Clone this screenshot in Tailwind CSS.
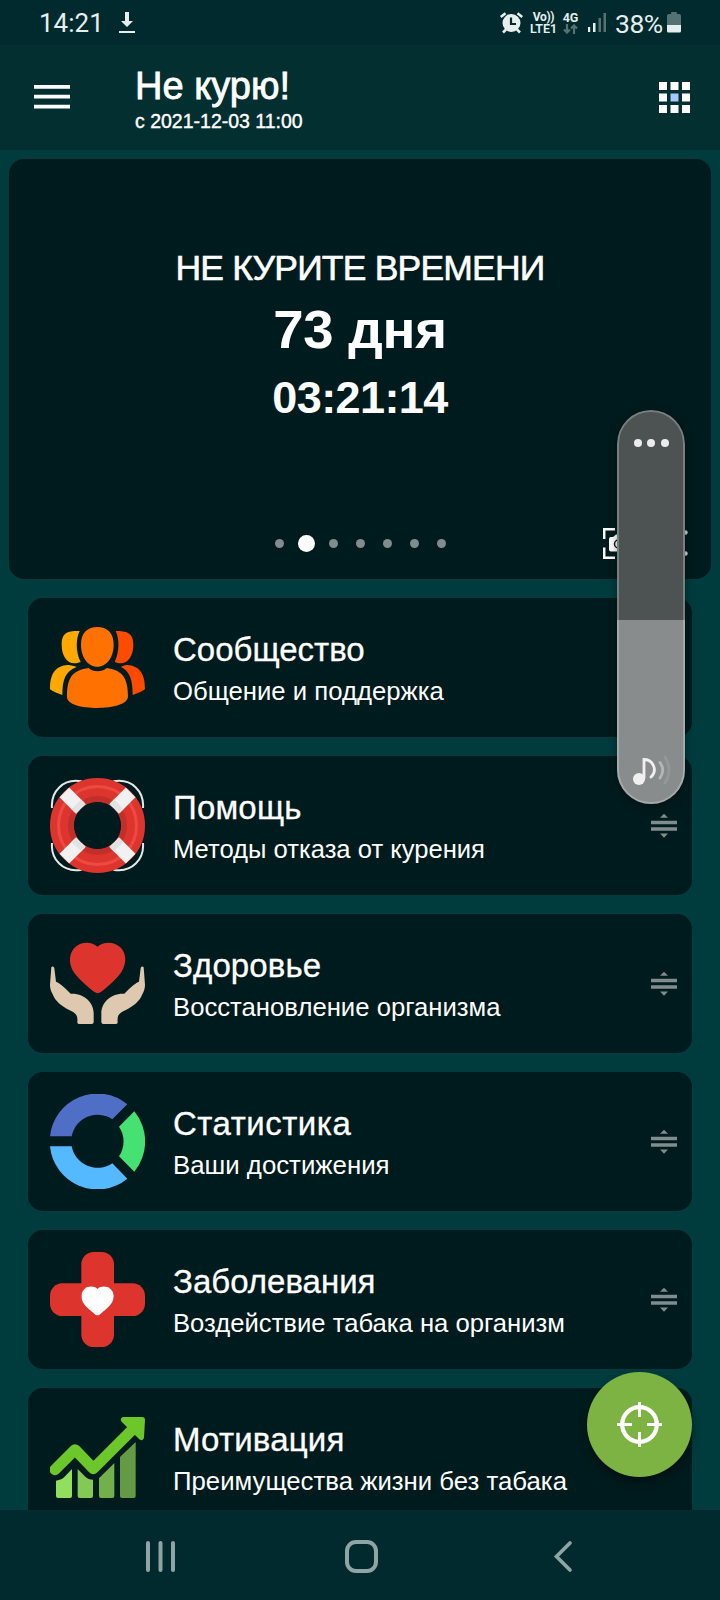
<!DOCTYPE html>
<html lang="ru">
<head>
<meta charset="utf-8">
<title>Не курю!</title>
<script src="https://cdn.jsdelivr.net/npm/@tailwindcss/browser@4"></script>
</head>
<body class="bg-[#003b3e]">
<svg class="hidden"><symbol id="handle" viewBox="0 0 26 26"><path d="M0 7.700h26v3.600H0zM0 14.200h26v3.600H0zM9 4.800 13 .8l4 4zM9 20.500l4 4.200 4-4.200z"/></symbol></svg>
<div class="relative flex h-[1600px] w-[720px] flex-col overflow-hidden bg-[#003b3e] font-['Liberation_Sans',Arial,sans-serif] text-white">

  <!-- Status bar -->
  <div class="flex h-[45px] shrink-0 items-center justify-between bg-[#002a2d] pr-[39px] pl-[39px] font-[Roboto,sans-serif] text-[#e6efee]">
    <div class="flex items-center">
      <span class="w-[80px] pt-px text-[26px] leading-[45px]">14:21</span>
      <svg class="h-[22px] w-[16px]" viewBox="0 0 16 22" fill="currentColor"><path d="M6 0h4v9h4l-6 6-6-6h4zM0 19h16v2H0z"/></svg>
    </div>
    <div class="flex items-center">
      <svg class="h-[22px] w-[23px]" viewBox="0 0 23 22"><g fill="none" stroke="#e6efee" stroke-width="2.600"><path d="M.8 5 5.500 1.300M22.200 5 17.500 1.300M6 17.500 3 20.500M17 17.500l3 3"/></g><circle cx="11.500" cy="11" r="9" fill="#e6efee"/><path d="M11 5.500v6.500h5" fill="none" stroke="#002a2d" stroke-width="2.200"/></svg>
      <div class="ml-[7px] flex w-[27px] flex-col items-center text-[12px] leading-[11px] font-bold whitespace-nowrap"><span class="tracking-[-0.3px]">Vo))</span><span class="text-[12.500px] font-semibold">LTE1</span></div>
      <div class="ml-[5px] flex w-[17px] flex-col items-center text-[12.500px] leading-[12px] font-bold"><span>4G</span>
        <svg class="h-[10px] w-[15px]" viewBox="0 0 15 10" fill="none" stroke="#557273" stroke-width="2.200"><path d="M4 0v8M1 5.500l3 3 3-3M11 10V2M8 4.500l3-3 3 3"/></svg></div>
      <svg class="ml-[9px] h-[19px] w-[19px]" viewBox="0 0 19 19"><path d="M0 14h2.200v5H0zM5 10h2.500v9H5z" fill="#e6efee"/><path d="M10.500 5H13v14h-2.500zM15.500 0H18v19h-2.500z" fill="#557273"/></svg>
      <span class="ml-[8px] w-[52px] pt-[2px] text-[26.500px] leading-[45px] tracking-[-0.5px]">38%</span>
      <svg class="h-[21px] w-[14px]" viewBox="0 0 15 21" preserveAspectRatio="none"><path d="M4.500 0h6v2H13q2 0 2 2v9H0V4q0-2 2-2h2.500z" fill="#557273"/><path d="M0 13h15v6q0 1.500-1.500 1.500h-12Q0 20.500 0 19z" fill="#e6efee"/></svg>
    </div>
  </div>

  <!-- App bar -->
  <header class="flex h-[105px] shrink-0 items-start bg-[#032f31]">
    <svg class="mt-[40px] ml-[34px] h-[24px] w-[36px]" viewBox="0 0 36 24" fill="#fff"><path d="M0 0h36v3.700H0zM0 9.800h36v3.700H0zM0 19.800h36v3.700H0z"/></svg>
    <div class="mt-[19px] ml-[65px] flex-1 whitespace-nowrap">
      <h1 class="text-[38px] leading-[44px] [-webkit-text-stroke:0.8px_white]">Не курю!</h1>
      <p class="mt-[2px] text-[19.500px] leading-[22px] [-webkit-text-stroke:0.4px_white]">с 2021-12-03 11:00</p>
    </div>
    <svg class="mt-[37px] mr-[30px] h-[31px] w-[31px]" viewBox="0 0 31 31" fill="#fff"><path d="M0 0h8v8H0zM11.500 0h8v8h-8zM23 0h8v8h-8zM0 11.500h8v8H0zM23 11.500h8v8h-8zM0 23h8v8H0zM11.500 23h8v8h-8zM23 23h8v8h-8z"/><path d="M11.500 11.500h8v8h-8z" fill="#a5c8ff"/></svg>
  </header>

  <!-- Counter card -->
  <section class="mx-[9px] mt-[9px] flex h-[420px] shrink-0 flex-col items-center rounded-[15px] bg-[#001b1d] pt-[89px] whitespace-nowrap">
    <h2 class="text-[35.500px] leading-[40px] tracking-[-0.8px] [-webkit-text-stroke:0.6px_white]">НЕ КУРИТЕ ВРЕМЕНИ</h2>
    <div class="mt-[12px] text-[54.500px] leading-[60px] font-bold tracking-[-0.3px]">73 дня</div>
    <div class="mt-[13px] text-[45px] leading-[50px] font-bold tracking-[-0.6px]">03:21:14</div>
    <div class="mt-[103px] flex h-[34px] w-full items-center">
      <div class="ml-[257px] flex items-center">
        <div class="flex w-[27px] justify-center"><i class="size-[9px] rounded-full bg-[#7f8d8e]"></i></div>
        <div class="flex w-[27px] justify-center"><i class="size-[17px] rounded-full bg-white"></i></div>
        <div class="flex w-[27px] justify-center"><i class="size-[9px] rounded-full bg-[#7f8d8e]"></i></div>
        <div class="flex w-[27px] justify-center"><i class="size-[9px] rounded-full bg-[#7f8d8e]"></i></div>
        <div class="flex w-[27px] justify-center"><i class="size-[9px] rounded-full bg-[#7f8d8e]"></i></div>
        <div class="flex w-[27px] justify-center"><i class="size-[9px] rounded-full bg-[#7f8d8e]"></i></div>
        <div class="flex w-[27px] justify-center"><i class="size-[9px] rounded-full bg-[#7f8d8e]"></i></div>
      </div>
      <svg class="ml-[148px] h-[31px] w-[31px] shrink-0" viewBox="0 0 31 31"><path d="M12 1.200H1.200V11M19 1.200h10.800V11M12 29.800H1.200V19.500M19 29.800h10.800V19.500" fill="none" stroke="#fff" stroke-width="2.500"/><path d="M8 9h2l3-2.500h5L21 9h2q2 0 2 2v10.500q0 2-2 2H8q-2 0-2-2V11q0-2 2-2z" fill="#fff"/><circle cx="15.500" cy="16" r="4" fill="none" stroke="#001b1d" stroke-width="1.500"/></svg>
      <svg class="ml-[32px] h-[26px] w-[22px] shrink-0" viewBox="0 0 22 26"><path d="M19 3 4 13l15 10" fill="none" stroke="#fff" stroke-width="2"/><circle cx="19.500" cy="2.500" r="2.200" fill="#c9d0d0"/><circle cx="19.500" cy="23.500" r="2.200" fill="#c9d0d0"/></svg>
    </div>
  </section>

  <!-- Menu -->
  <main class="mx-[28px] mt-[19px] flex h-[912px] shrink-0 flex-col gap-[19px] overflow-hidden whitespace-nowrap">
    <article class="flex h-[139px] shrink-0 items-center rounded-[15px] bg-[#001b1d] pl-[22px]">
      <svg class="size-[95px]" viewBox="0 0 285 285">
        <path d="M89 33C58 33 35 34 35 74c0 32 15 56 38 56 7 0 11-2 19-4C76 94 78 56 89 33zM52 135C22 138 0 153 0 208c10 8 24 13 37 17 0-46 9-71 43-84-9-3-18-7-28-6z" fill="#ffa800"/>
        <path d="M197 33c31 0 53 4 53 41 0 32-15 56-38 56-7 0-11-2-18-4 15-32 14-70 3-93zM233 135c30 3 52 18 52 73-10 8-24 13-37 17 0-46-9-71-35-84 5-3 10-7 20-6z" fill="#ff4b00"/>
        <path d="M142 21c29 0 49 17 49 53 0 36-20 66-49 66s-49-30-49-66c0-36 20-53 49-53zM116 144c14 13 39 13 54 0 44 6 64 26 64 85 0 24-44 35-92 35s-91-11-91-33c0-60 17-80 65-87z" fill="#ff7100"/>
      </svg>
      <div class="ml-[28px] flex-1">
        <h3 class="text-[33px] leading-[40px] [-webkit-text-stroke:0.3px_white]">Сообщество</h3>
        <p class="mt-[6px] -mb-px text-[25.700px] leading-[30px]">Общение и поддержка</p>
      </div>
      <svg class="mr-[15px] size-[26px] fill-[#7f8d8e]"><use href="#handle"/></svg>
    </article>
    <article class="flex h-[139px] shrink-0 items-center rounded-[15px] bg-[#001b1d] pl-[22px]">
      <svg class="size-[95px]" viewBox="0 0 285 285">
        <g fill="none">
          <path d="M6 90C2 42 38 0 95 10M279 90C283 42 247 0 190 10M6 195c-4 48 32 90 89 80M279 195c4 48-32 90-89 80" stroke="#e4eaea" stroke-width="6"/>
          <circle cx="142.500" cy="142.500" r="106.500" stroke="#dd352e" stroke-width="72"/>
          <circle cx="142.500" cy="142.500" r="117" stroke="#ed4a43" stroke-width="9"/>
          <circle cx="142.500" cy="142.500" r="79.500" stroke="#c22f2b" stroke-width="18"/>
          <path d="M43 43 91 91M242 43 194 91M43 242l48-48M242 242l-48-48" stroke="#f1f1f1" stroke-width="41"/>
          <path d="m79 79 14 14M206 79l-14 14M79 206l14-14M206 206l-14-14" stroke="#e2e2e2" stroke-width="41"/>
        </g>
        <circle cx="142.500" cy="142.500" r="70.500" fill="#001b1d"/>
      </svg>
      <div class="ml-[28px] flex-1">
        <h3 class="text-[33px] leading-[40px] tracking-[0.2px] [-webkit-text-stroke:0.3px_white]">Помощь</h3>
        <p class="mt-[6px] -mb-px text-[25.600px] leading-[30px]">Методы отказа от курения</p>
      </div>
      <svg class="mr-[15px] size-[26px] fill-[#7f8d8e]"><use href="#handle"/></svg>
    </article>
    <article class="flex h-[139px] shrink-0 items-center rounded-[15px] bg-[#001b1d] pl-[22px]">
      <svg class="size-[95px]" viewBox="0 0 285 285">
        <path d="M142.500 32C124 15 92 18 76 33c-19 17-20 46-9 68 11 21 38 44 63 65 9 7 17 7 26 0 25-21 52-44 62-65 12-22 11-51-8-68-17-15-49-18-67.500-1z" fill="#dd352e"/>
        <path d="M4 94c3-4 8-2 9 3l5 40c18 7 33 26 44 36 44-2 69 30 69 58v27c0 4-3 6-6 6H87c-3 0-5-2-5-5 2-24-6-27-23-36-24-12-43-27-51-48-6-12-8-20-8-29z" fill="#dec9b0"/>
        <path d="M281 94c-3-4-8-2-9 3l-5 40c-18 7-33 26-44 36-44-2-69 30-69 58v27c0 4 3 6 6 6h38c3 0 5-2 5-5-2-24 6-27 23-36 24-12 43-27 51-48 6-12 8-20 8-29z" fill="#dec9b0"/>
      </svg>
      <div class="ml-[28px] flex-1">
        <h3 class="text-[33px] leading-[40px] tracking-[0.1px] [-webkit-text-stroke:0.3px_white]">Здоровье</h3>
        <p class="mt-[6px] -mb-px text-[25.700px] leading-[30px]">Восстановление организма</p>
      </div>
      <svg class="mr-[15px] size-[26px] fill-[#7f8d8e]"><use href="#handle"/></svg>
    </article>
    <article class="flex h-[139px] shrink-0 items-center rounded-[15px] bg-[#001b1d] pl-[22px]">
      <svg class="size-[95px]" viewBox="0 0 285 285">
        <path d="M0 127A142.500 142.500 0 0 1 232 31L187 76A79 79 0 0 0 65 127z" fill="#4f6ec6"/>
        <path d="M0 157A142.500 142.500 0 0 0 232 254L187 208A79 79 0 0 1 65 157z" fill="#54b9ff"/>
        <path d="M253 52A142.500 142.500 0 0 1 253 233L207 187A79 79 0 0 0 207 98z" fill="#45e173"/>
      </svg>
      <div class="ml-[28px] flex-1">
        <h3 class="text-[33px] leading-[40px] tracking-[0.5px] [-webkit-text-stroke:0.3px_white]">Статистика</h3>
        <p class="mt-[6px] -mb-px text-[25.800px] leading-[30px]">Ваши достижения</p>
      </div>
      <svg class="mr-[15px] size-[26px] fill-[#7f8d8e]"><use href="#handle"/></svg>
    </article>
    <article class="flex h-[139px] shrink-0 items-center rounded-[15px] bg-[#001b1d] pl-[22px]">
      <svg class="size-[95px]" viewBox="0 0 285 285">
        <rect x="94" y="0" width="98" height="285" rx="37" fill="#dd352e"/><rect x="0" y="94" width="285" height="98" rx="37" fill="#dd352e"/>
        <path d="M142.500 111c-10-10-29-9-39 0-11 10-11 29-3 43 8 13 22 22 36 34q6 4 12 0c14-12 28-21 36-34 9-14 9-33-3-43-10-9-29-10-39 0z" fill="#fff"/>
      </svg>
      <div class="ml-[28px] flex-1">
        <h3 class="text-[33px] leading-[40px] [-webkit-text-stroke:0.3px_white]">Заболевания</h3>
        <p class="mt-[6px] -mb-px text-[25.650px] leading-[30px]">Воздействие табака на организм</p>
      </div>
      <svg class="mr-[15px] size-[26px] fill-[#7f8d8e]"><use href="#handle"/></svg>
    </article>
    <article class="flex h-[139px] shrink-0 items-center rounded-[15px] bg-[#001b1d] pl-[22px]">
      <svg class="size-[95px]" viewBox="0 0 285 285">
        <path d="M18 212q18-3 25-11l23-24v81q0 6-6 6H24q-6 0-6-6z" fill="#91df5c"/>
        <path d="m83 177 23 23q9 9 23 9v49q0 6-6 6H89q-6 0-6-6z" fill="#82c955"/>
        <path d="m147 205 46-46v99q0 6-6 6h-34q-6 0-6-6z" fill="#72b04c"/>
        <path d="m210 141 47-45v162q0 6-6 6h-35q-6 0-6-6z" fill="#649a43"/>
        <path d="m15 179 60-60 55 57L247 59" fill="none" stroke="#6cc82a" stroke-width="33" stroke-linecap="round" stroke-linejoin="round"/>
        <path d="M222 21h54q9 0 9 9l-3 52c-1 9-9 11-15 5l-52-52c-5-6-2-14 7-14z" fill="#6cc82a"/>
      </svg>
      <div class="ml-[28px] flex-1">
        <h3 class="text-[33px] leading-[40px] tracking-[0.2px] [-webkit-text-stroke:0.3px_white]">Мотивация</h3>
        <p class="mt-[6px] -mb-px text-[25.750px] leading-[30px]">Преимущества жизни без табака</p>
      </div>
    </article>
  </main>

  <!-- System navigation -->
  <nav class="flex h-[90px] shrink-0 items-center bg-[#002a2d]">
    <svg class="mt-[2px] ml-[146px] h-[32px] w-[30px]" viewBox="0 0 30 32" fill="#8fa4a5"><rect x="0" y="1" width="4" height="31" rx="2"/><rect x="12.500" y="1" width="4" height="31" rx="2"/><rect x="25" y="1" width="4" height="31" rx="2"/></svg>
    <div class="mt-[3px] ml-[169px] size-[33px] rounded-[11px] border-4 border-[#8fa4a5]"></div>
    <svg class="mt-[3px] ml-[175px] h-[33px] w-[20px]" viewBox="0 0 20 33" fill="none" stroke="#8fa4a5" stroke-width="3.700" stroke-linecap="round"><path d="M17 3 3.500 16.500 17 30"/></svg>
  </nav>

  <!-- Volume overlay -->
  <div class="absolute top-[410px] left-[617px] flex h-[394px] w-[68px] flex-col overflow-hidden rounded-full bg-[#4d5353] shadow-[0_2px_10px_rgba(0,0,0,0.35)]">
    <div class="flex h-[210px] justify-center gap-[5.500px] pt-[28.500px]">
      <i class="size-[8px] rounded-full bg-[#ececec]"></i><i class="size-[8px] rounded-full bg-[#ececec]"></i><i class="size-[8px] rounded-full bg-[#ececec]"></i>
    </div>
    <div class="flex flex-1 items-end bg-[#898c8d] pb-[18px] pl-[15px]">
      <svg class="h-[32px] w-[40px]" viewBox="0 0 40 32"><circle cx="7" cy="25" r="6" fill="#f0f0f0"/><g fill="none" stroke-width="2.800" stroke-linecap="round"><path d="M12 24V5.500c9 0 14 11 7 17.500" stroke="#f0f0f0"/><path d="M28 8.500q5.500 7.500 0 15.500" stroke="#b4b6b7"/><path d="M33 3q8 13 0 26" stroke="#959899"/></g></svg>
    </div>
    <div class="absolute inset-0 rounded-full border-2 border-white/25"></div>
  </div>

  <!-- Floating button -->
  <button class="absolute top-[1372px] left-[587px] flex size-[105px] items-center justify-center rounded-full bg-[#7db343] shadow-[0_5px_9px_rgba(0,0,0,0.4)]">
    <svg class="size-[45px]" viewBox="0 0 45 45" fill="none" stroke="#fff"><circle cx="22.500" cy="22.500" r="17.300" stroke-width="4.300"/><path d="M22.500 0v15M22.500 30v15M0 22.500h15M30 22.500h15" stroke-width="3"/></svg>
  </button>
</div>
</body>
</html>
